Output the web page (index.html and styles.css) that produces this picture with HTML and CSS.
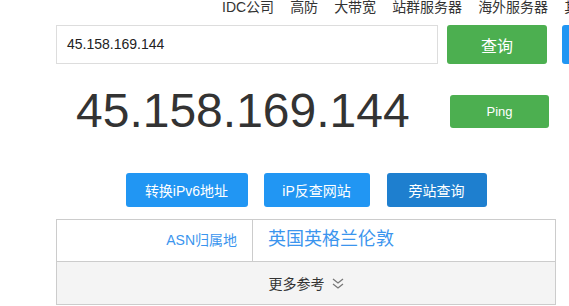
FILE: index.html
```html
<!DOCTYPE html>
<html lang="zh-CN">
<head>
<meta charset="utf-8">
<title>IP查询</title>
<link rel="stylesheet" href="styles.css">
</head>
<body>
<div class="nav">
  <span class="nav-item">IDC公司</span>
  <span class="nav-item">高防</span>
  <span class="nav-item">大带宽</span>
  <span class="nav-item">站群服务器</span>
  <span class="nav-item">海外服务器</span>
  <span class="nav-item">其他</span>
</div>
<div class="main">
  <div class="search">
    <div class="input">45.158.169.144</div>
    <div class="btn btn-green btn-query">查询</div>
    <div class="btn btn-blue btn-extra">更多</div>
  </div>
  <div class="iprow">
    <div class="ip">45.158.169.144</div>
    <div class="btn btn-green btn-ping">Ping</div>
  </div>
  <div class="actions">
    <div class="btn btn-blue btn-a1">转换iPv6地址</div>
    <div class="btn btn-blue btn-a2">iP反查网站</div>
    <div class="btn btn-dark btn-a3">旁站查询</div>
  </div>
  <div class="table">
    <div class="row">
      <div class="label">ASN归属地</div>
      <div class="value">英国英格兰伦敦</div>
    </div>
    <div class="more">更多参考
      <svg class="chev" width="12" height="11" viewBox="0 0 12 11"><path d="M1 1 L6 5 L11 1 M1 6 L6 10 L11 6" fill="none" stroke="#777" stroke-width="1.3"/></svg>
    </div>
  </div>
</div>
</body>
</html>
```

FILE: styles.css
```css
* { box-sizing: border-box; }
html, body { margin: 0; padding: 0; background: #fff; }
body {
  font-family: "Liberation Sans", "Noto Sans CJK SC", sans-serif;
  color: #333;
  width: 569px;
  height: 306px;
  overflow: hidden;
}
.nav {
  display: flex;
  gap: 16px;
  padding-left: 222px;
  height: 14px;
  line-height: 14px;
  font-size: 14px;
  color: #333;
  white-space: nowrap;
  overflow: hidden;
}
.main {
  margin-left: 56px;
  width: 500px;
}
.search {
  display: flex;
  margin-top: 11px;
  height: 39px;
  white-space: nowrap;
}
.input {
  flex: none;
  width: 382px;
  height: 39px;
  border: 1px solid #ddd;
  padding-left: 10px;
  font-size: 14px;
  line-height: 37px;
  color: #222;
}
.btn {
  display: flex;
  align-items: center;
  justify-content: center;
  color: #fff;
  border-radius: 3px;
  font-size: 14px;
  flex: none;
}
.btn-green { background: #4caf50; }
.btn-blue { background: #2196f3; }
.btn-dark { background: #1e7fcf; }
.btn-query { width: 100px; margin-left: 9px; font-size: 16px; }
.btn-extra { width: 100px; margin-left: 15px; }
.iprow {
  display: flex;
  align-items: center;
  margin-top: 23px;
  height: 48px;
}
.ip {
  font-size: 48px;
  line-height: 48px;
  margin-left: 20px;
  color: #333;
}
.btn-ping {
  width: 99px;
  height: 33px;
  margin-left: auto;
  margin-right: 7px;
  font-size: 13px;
}
.actions {
  display: flex;
  justify-content: center;
  margin-top: 38px;
  height: 34px;
}
.actions .btn { height: 34px; }
.btn-a1 { width: 122px; }
.btn-a2 { width: 106px; margin-left: 16px; }
.btn-a3 { width: 100px; margin-left: 17px; }
.table {
  margin-top: 12px;
  border: 1px solid #ccc;
}
.row {
  display: flex;
  height: 42px;
  border-bottom: 1px solid #ccc;
}
.label {
  width: 196px;
  border-right: 1px solid #ccc;
  text-align: right;
  padding-right: 15px;
  font-size: 14px;
  line-height: 41px;
  color: #3b95ee;
}
.value {
  padding-left: 15px;
  font-size: 18px;
  line-height: 39px;
  color: #3b95ee;
}
.more {
  height: 42px;
  background: #f4f4f4;
  display: flex;
  align-items: center;
  justify-content: center;
  gap: 7px;
  font-size: 14px;
  color: #333;
}
.chev { display: block; margin-top: 1px; }
```
